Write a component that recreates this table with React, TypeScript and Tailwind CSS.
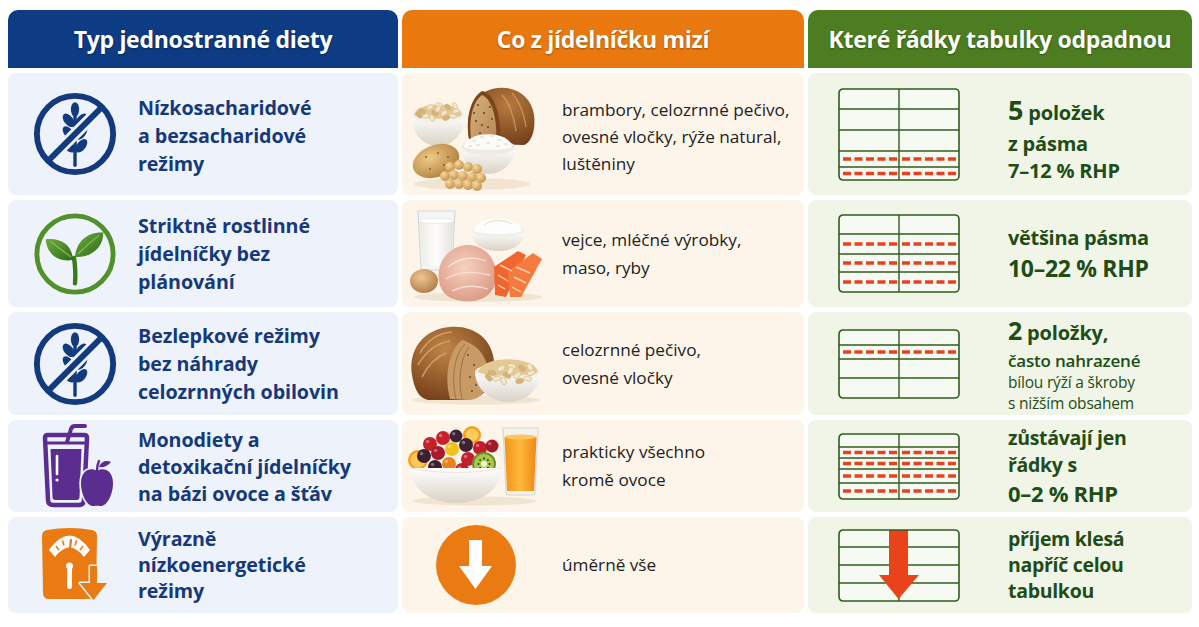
import * as React from "react";

/**
 * Tabulka: typ jednostranné diety → co mizí z jídelníčku → které řádky
 * tabulky odpadnou. Tři sloupce, pět řádků, ikony a ilustrace kreslené v SVG.
 */

const BG1 = "#eef3fb";

function WheatNo() {
  const c = "#133a7c";
  return (
    <svg width="88" height="88" viewBox="0 0 90 90">
      <g fill={c}>
        <path d="M45 26 L45 77" stroke={c} strokeWidth="3.5" strokeLinecap="round" />
        <ellipse cx="45" cy="20" rx="4.2" ry="7.5" />
        {[31, 44, 57].map((y) => (
          <g key={y}>
            <ellipse cx="38.5" cy={y} rx="4.6" ry="8" transform={`rotate(-38 38.5 ${y})`} />
            <ellipse cx="51.5" cy={y} rx="4.6" ry="8" transform={`rotate(38 51.5 ${y})`} />
          </g>
        ))}
      </g>
      <line x1="17" y1="73" x2="73" y2="17" stroke={BG1} strokeWidth="12" />
      <line x1="17" y1="73" x2="73" y2="17" stroke={c} strokeWidth="6" />
      <circle cx="45" cy="45" r="39" fill="none" stroke={c} strokeWidth="6" />
    </svg>
  );
}

function Sprout() {
  return (
    <svg width="88" height="88" viewBox="0 0 90 90">
      <defs>
        <linearGradient id="lf1" x1="0" y1="0" x2="1" y2="1">
          <stop offset="0" stopColor="#6fab3e" />
          <stop offset="1" stopColor="#2e6c19" />
        </linearGradient>
      </defs>
      <circle cx="45" cy="45" r="39" fill="none" stroke="#52902a" strokeWidth="5" />
      <path d="M45 75 C46 64 45 56 44 49" stroke="#3a7a1e" strokeWidth="4.5" fill="none" strokeLinecap="round" />
      <path d="M43 51 C28 54 16 45 15 30 C31 28 42 36 43 51 Z" fill="url(#lf1)" />
      <path d="M45 48 C46 33 57 22 74 23 C74 39 61 49 45 48 Z" fill="url(#lf1)" />
      <path d="M41 48 C34 43 26 37 20 32" stroke="#9ccc6c" strokeWidth="1.2" fill="none" opacity="0.7" />
      <path d="M48 45 C55 38 62 31 70 26" stroke="#9ccc6c" strokeWidth="1.2" fill="none" opacity="0.7" />
    </svg>
  );
}

function Juice() {
  const c = "#5b2d90";
  return (
    <svg width="80" height="84" viewBox="-6 0 80 84">
      <path d="M26 18 L30 5 Q31 2 34 2 L44 2" stroke={c} strokeWidth="4" fill="none" strokeLinecap="round" strokeLinejoin="round" />
      <path d="M4 14 Q4 11 7 11 L43 11 Q46 11 46 14 L43 76 Q43 81 38 81 L12 81 Q7 81 7 76 Z" fill="none" stroke={c} strokeWidth="4.5" />
      <line x1="5" y1="19" x2="45" y2="19" stroke={c} strokeWidth="3" />
      <path d="M9.5 25 L40.5 25 L38.5 73 Q38.5 76 35.5 76 L14.5 76 Q11.5 76 11.5 73 Z" fill={c} />
      <path d="M16 32 L16 50" stroke="#fff" strokeWidth="2.6" strokeLinecap="round" />
      <circle cx="16" cy="56" r="1.6" fill="#fff" />
      <path
        d="M56 47 C50 43 40 46 40 59 C40 72 47 83 53 82 C55 81.5 57 81.5 59 82 C65 83 72 72 72 59 C72 46 62 43 56 47 Z"
        fill={c}
        stroke={BG1}
        strokeWidth="3.5"
        paintOrder="stroke"
      />
      <path d="M56 47 Q56 41 58 37" stroke={c} strokeWidth="2.5" fill="none" strokeLinecap="round" />
      <path d="M58 43 C60 37 66 36 70 38 C67 42 62 44 58 43 Z" fill={c} />
    </svg>
  );
}

function ScaleDown() {
  const c = "#ea7a12";
  return (
    <svg width="70" height="76" viewBox="0 0 70 76">
      <path d="M7 3 Q30 -1 52 3 Q57 4 57 9 L56 66 Q56 72 50 72 L9 72 Q3 72 3 66 L2 9 Q2 4 7 3 Z" fill={c} />
      <path d="M9 23 Q29.5 -6 50 23 L44 30 Q29.5 11 15 30 Z" fill="#fff" />
      <g stroke={c} strokeWidth="1.6">
        <line x1="16" y1="19" x2="19" y2="23" />
        <line x1="22.5" y1="13.5" x2="24" y2="18.5" />
        <line x1="36.5" y1="13.5" x2="35" y2="18.5" />
        <line x1="43" y1="19" x2="40" y2="23" />
      </g>
      <line x1="29.5" y1="26" x2="31" y2="13" stroke={c} strokeWidth="2.2" strokeLinecap="round" />
      <circle cx="29.5" cy="39" r="3.5" fill="#fff" />
      <rect x="27" y="39" width="5" height="23" rx="2.5" fill="#fff" />
      <path
        d="M50 39 L57 39 L57 56 L67 56 L53.5 73 L40 56 L50 56 Z"
        fill={c}
        stroke={BG1}
        strokeWidth="3"
        strokeLinejoin="round"
        paintOrder="stroke"
      />
    </svg>
  );
}

const FLAKES: [number, number, number][] = [
  [14, 26, 20], [22, 22, -30], [31, 20, 10], [40, 22, 40], [48, 26, -20], [18, 31, -10],
  [27, 28, 30], [36, 28, -40], [45, 31, 15], [11, 30, 50], [30, 24, -60], [24, 33, 70],
  [38, 33, -15], [47, 21, 60],
];

function Flakes({ dx, dy, s = 1 }: { dx: number; dy: number; s?: number }) {
  return (
    <g transform={`translate(${dx} ${dy}) scale(${s})`}>
      {FLAKES.map(([x, y, r], i) => (
        <ellipse
          key={i}
          cx={x}
          cy={y}
          rx="3.6"
          ry="2.2"
          transform={`rotate(${r} ${x} ${y})`}
          fill={i % 3 === 0 ? "#d6b37c" : "#f4e6c8"}
          stroke="#c8a66e"
          strokeWidth="0.4"
        />
      ))}
    </g>
  );
}

function FoodCarbs() {
  const peas: [number, number][] = [
    [42, 82], [51, 80], [60, 82], [69, 84], [37, 91], [46, 90], [55, 91], [64, 92], [73, 93],
    [42, 99], [51, 99], [60, 100], [69, 101],
  ];
  return (
    <svg width="128" height="106" viewBox="0 0 128 106">
      <defs>
        <linearGradient id="c-bowl" x1="0" y1="0" x2="0" y2="1">
          <stop offset="0" stopColor="#ffffff" />
          <stop offset="1" stopColor="#d9d1c5" />
        </linearGradient>
        <radialGradient id="c-crust" cx="0.6" cy="0.3" r="0.8">
          <stop offset="0" stopColor="#b87b40" />
          <stop offset="1" stopColor="#6a3815" />
        </radialGradient>
        <linearGradient id="c-face" x1="0" y1="0" x2="1" y2="1">
          <stop offset="0" stopColor="#d8b17c" />
          <stop offset="1" stopColor="#b68655" />
        </linearGradient>
        <radialGradient id="c-pot" cx="0.4" cy="0.35" r="0.75">
          <stop offset="0" stopColor="#edcb86" />
          <stop offset="1" stopColor="#ad7837" />
        </radialGradient>
        <radialGradient id="c-pea" cx="0.35" cy="0.3" r="0.8">
          <stop offset="0" stopColor="#f6da9c" />
          <stop offset="1" stopColor="#c18a44" />
        </radialGradient>
      </defs>
      <ellipse cx="64" cy="99" rx="58" ry="6" fill="#ead8bf" opacity="0.6" />
      {/* bochník s naříznutou stranou */}
      <path d="M62 58 C56 34 62 10 84 4 C104 -1 123 9 126 30 C128 46 123 57 116 60 Z" fill="url(#c-crust)" />
      <path d="M62 59 C57 38 61 14 74 6 C86 8 94 30 92 60 Z" fill="#7b4419" />
      <path d="M64 59 C60 40 63 18 74 10 C84 14 90 34 88 60 Z" fill="url(#c-face)" />
      {[[70, 20], [76, 28], [68, 36], [80, 42], [72, 48], [82, 22], [66, 28], [78, 54], [84, 34], [74, 40], [70, 56]].map(([x, y], i) => (
        <circle key={i} cx={x} cy={y} r="1.1" fill="#6d4a26" />
      ))}
      <path d="M94 10 C100 16 106 30 108 46 M104 8 C111 16 116 28 118 42" stroke="#d8a468" strokeWidth="1.4" fill="none" opacity="0.7" />
      {/* miska ovesných vloček */}
      <path d="M3 30 C4 50 16 61 30 61 C44 61 56 50 57 30 Z" fill="url(#c-bowl)" />
      <ellipse cx="30" cy="30" rx="27" ry="8" fill="#f4f0ea" />
      <path d="M6 30 C8 16 52 16 54 30 C46 35 14 35 6 30 Z" fill="#e3c995" />
      <Flakes dx={0} dy={0} />
      {/* miska rýže */}
      <path d="M53 62 C54 79 66 89 80 89 C94 89 106 79 107 62 Z" fill="url(#c-bowl)" />
      <ellipse cx="80" cy="62" rx="27" ry="8" fill="#efebe4" />
      <path d="M56 62 C58 45 102 45 104 62 C96 66 64 66 56 62 Z" fill="#fbfbf8" />
      {[[66, 56], [74, 52], [84, 51], [92, 55], [70, 60], [80, 58], [90, 61], [98, 59], [62, 61]].map(([x, y], i) => (
        <ellipse key={i} cx={x} cy={y} rx="2" ry="1.1" fill="#e6e2d8" />
      ))}
      <ellipse cx="28" cy="76" rx="24" ry="16" transform="rotate(-20 28 76)" fill="url(#c-pot)" />
      {[[18, 72], [30, 68], [36, 80], [22, 84], [40, 72]].map(([x, y], i) => (
        <circle key={i} cx={x} cy={y} r="0.9" fill="#7c5426" />
      ))}
      {peas.map(([x, y], i) => (
        <circle key={i} cx={x} cy={y} r="5" fill="url(#c-pea)" />
      ))}
    </svg>
  );
}

function FoodProtein() {
  return (
    <svg width="138" height="94" viewBox="0 0 138 94">
      <defs>
        <linearGradient id="p-bowl" x1="0" y1="0" x2="0" y2="1">
          <stop offset="0" stopColor="#ffffff" />
          <stop offset="1" stopColor="#d9d1c5" />
        </linearGradient>
        <radialGradient id="p-egg" cx="0.4" cy="0.35" r="0.7">
          <stop offset="0" stopColor="#eec796" />
          <stop offset="1" stopColor="#b27b47" />
        </radialGradient>
        <radialGradient id="p-chick" cx="0.45" cy="0.4" r="0.7">
          <stop offset="0" stopColor="#f6d2c0" />
          <stop offset="1" stopColor="#d9957f" />
        </radialGradient>
        <linearGradient id="p-milk" x1="0" y1="0" x2="1" y2="0">
          <stop offset="0" stopColor="#eceae4" />
          <stop offset="0.5" stopColor="#fdfdfb" />
          <stop offset="1" stopColor="#e5e2db" />
        </linearGradient>
      </defs>
      <ellipse cx="70" cy="88" rx="64" ry="5" fill="#ead8bf" opacity="0.6" />
      <path d="M10 2 L47 2 L44 58 Q44 61 41 61 L16 61 Q13 61 13 58 Z" fill="#f4f5f5" stroke="#d3d8db" strokeWidth="1.2" />
      <path d="M11.6 12 L45.4 12 L43 57 L15 57 Z" fill="url(#p-milk)" />
      <ellipse cx="28.5" cy="12" rx="17" ry="2.5" fill="#ffffff" stroke="#e4e2dc" strokeWidth="0.6" />
      <path d="M63 22 C64 36 76 42 90 42 C104 42 116 36 117 22 Z" fill="url(#p-bowl)" />
      <ellipse cx="90" cy="22" rx="27" ry="6" fill="#f2efe9" />
      <path d="M66 22 C70 5 110 5 114 22 C104 26 76 26 66 22 Z" fill="#fdfdfb" />
      <path d="M76 16 C84 10 96 10 104 15" stroke="#e7e4dd" strokeWidth="1.2" fill="none" />
      <ellipse cx="16" cy="72" rx="14" ry="12" fill="url(#p-egg)" />
      <path d="M31 72 C28 54 40 38 58 36 C76 35 90 50 88 70 C86 88 70 94 54 92 C40 90 33 84 31 72 Z" fill="url(#p-chick)" />
      <path d="M40 58 C50 50 64 46 78 52 M38 70 C50 62 66 62 82 66 M44 82 C56 76 68 76 80 80" stroke="#fbe4da" strokeWidth="1.3" fill="none" opacity="0.85" />
      <path d="M86 58 L110 42 L118 46 L98 88 L87 86 Z" fill="#ef6630" />
      <path d="M100 62 L125 44 L134 50 L113 88 L102 88 Z" fill="#f47b3d" />
      <g stroke="#ffd9c2" strokeWidth="1.4" opacity="0.9">
        <line x1="92" y1="56" x2="104" y2="62" />
        <line x1="90" y1="66" x2="100" y2="72" />
        <line x1="90" y1="76" x2="97" y2="80" />
        <line x1="108" y1="58" x2="122" y2="64" />
        <line x1="106" y1="68" x2="118" y2="74" />
        <line x1="104" y1="78" x2="113" y2="83" />
      </g>
    </svg>
  );
}

function FoodGrain() {
  return (
    <svg width="136" height="80" viewBox="0 0 136 80">
      <defs>
        <linearGradient id="g-bowl" x1="0" y1="0" x2="0" y2="1">
          <stop offset="0" stopColor="#ffffff" />
          <stop offset="1" stopColor="#d9d1c5" />
        </linearGradient>
        <radialGradient id="g-crust" cx="0.4" cy="0.3" r="0.8">
          <stop offset="0" stopColor="#c08447" />
          <stop offset="1" stopColor="#6e3a15" />
        </radialGradient>
      </defs>
      <ellipse cx="68" cy="75" rx="64" ry="4.5" fill="#ead8bf" opacity="0.6" />
      <path d="M4 50 C0 24 16 4 42 2 C66 0 84 14 86 36 C88 58 78 74 56 75 L20 75 C10 73 6 62 4 50 Z" fill="url(#g-crust)" />
      <path d="M42 74 C36 52 40 26 54 15 C72 20 82 36 80 55 C78 69 70 75 60 75 Z" fill="#c79a66" />
      <path d="M48 74 C43 54 46 30 57 19 M54 74 C50 56 52 34 61 22" stroke="#8e5f32" strokeWidth="1" fill="none" opacity="0.7" />
      {[[60, 30], [66, 40], [62, 52], [72, 46], [68, 60], [74, 58], [64, 66]].map(([x, y], i) => (
        <circle key={i} cx={x} cy={y} r="1" fill="#6d4a26" />
      ))}
      <path d="M12 28 C20 14 32 8 44 7 M10 40 C18 26 30 18 42 16 M14 52 C20 40 28 32 38 28" stroke="#dba970" strokeWidth="1.6" fill="none" opacity="0.8" />
      <path d="M67 47 C68 66 84 77 100 77 C116 77 132 66 133 47 Z" fill="url(#g-bowl)" />
      <ellipse cx="100" cy="47" rx="33" ry="9" fill="#f4f0ea" />
      <path d="M70 47 C74 30 126 30 130 47 C120 52 80 52 70 47 Z" fill="#e3c995" />
      <Flakes dx={68} dy={18} s={1.15} />
    </svg>
  );
}

function FoodFruit() {
  const fruits: [number, number, number, string][] = [
    [22, 18, 7, "#c51f2a"], [35, 12, 7, "#c8222c"], [48, 10, 6.5, "#3d2236"], [16, 30, 7, "#3b1f33"],
    [30, 27, 7, "#a81a2a"], [44, 23, 7, "#f0c21c"], [58, 19, 7, "#3d2236"], [60, 33, 7, "#c02030"],
    [72, 22, 7, "#c41c2a"], [27, 41, 7, "#3a2030"], [41, 38, 7, "#e8841f"], [54, 44, 7, "#c01d2c"],
    [84, 20, 6.5, "#a61a28"],
  ];
  return (
    <svg width="134" height="80" viewBox="0 0 134 80">
      <defs>
        <linearGradient id="f-bowl" x1="0" y1="0" x2="0" y2="1">
          <stop offset="0" stopColor="#ffffff" />
          <stop offset="1" stopColor="#d9d1c5" />
        </linearGradient>
        <linearGradient id="f-oj" x1="0" y1="0" x2="1" y2="0">
          <stop offset="0" stopColor="#f39419" />
          <stop offset="0.5" stopColor="#fbb93c" />
          <stop offset="1" stopColor="#ee8812" />
        </linearGradient>
      </defs>
      <ellipse cx="66" cy="75" rx="62" ry="4.5" fill="#ead8bf" opacity="0.6" />
      <circle cx="10" cy="34" r="10" fill="#f7a21b" />
      <circle cx="10" cy="34" r="7.5" fill="#fcc85a" />
      <circle cx="64" cy="9" r="9" fill="#f59f1c" />
      <circle cx="64" cy="9" r="6.5" fill="#fccb5c" />
      {fruits.map(([x, y, r, col], i) => (
        <g key={i}>
          <circle cx={x} cy={y} r={r} fill={col} />
          <circle cx={x - r * 0.35} cy={y - r * 0.35} r={r * 0.25} fill="#ffffff" opacity="0.35" />
        </g>
      ))}
      <circle cx="76" cy="38" r="12" fill="#6f8f2a" />
      <circle cx="76" cy="38" r="10" fill="#a8c94a" />
      <circle cx="76" cy="38" r="3" fill="#eef3cf" />
      {[0, 45, 90, 135, 180, 225, 270, 315].map((a) => (
        <circle
          key={a}
          cx={76 + 5.5 * Math.cos((a * Math.PI) / 180)}
          cy={38 + 5.5 * Math.sin((a * Math.PI) / 180)}
          r="0.9"
          fill="#1d1d12"
        />
      ))}
      <path d="M2 42 C4 65 24 77 48 77 C72 77 92 65 94 42 Z" fill="url(#f-bowl)" />
      <path d="M2 42 C30 48 66 48 94 42" stroke="#ece7df" strokeWidth="1.2" fill="none" />
      <path d="M95 2 L130 2 L127 66 Q127 69 124 69 L101 69 Q98 69 98 66 Z" fill="#f4f2ee" stroke="#dcd8d0" strokeWidth="1.2" />
      <path d="M96.5 11 L128.5 11 L126 65 L99 65 Z" fill="url(#f-oj)" />
      <ellipse cx="112.5" cy="11" rx="16" ry="2.4" fill="#fcc560" />
    </svg>
  );
}

function DownCircle() {
  return (
    <div className="ml-[28px] flex h-[80px] w-[80px] items-center justify-center rounded-full bg-[#ea7a12]">
      <svg width="80" height="80" viewBox="0 0 80 80">
        <path d="M33 15 L46 15 L46 41 L56 41 L39.5 64 L23 41 L33 41 Z" fill="#fff" />
      </svg>
    </div>
  );
}

function RowTable({ rows, red = [], arrow = false }: { rows: number[]; red?: number[]; arrow?: boolean }) {
  const W = 120;
  const h = rows.reduce((a, b) => a + b, 0);
  const tops: number[] = [];
  rows.reduce((acc, r) => {
    tops.push(acc);
    return acc + r;
  }, 0);
  const line = "#2f5c1d";
  const dash = "#e8411d";
  return (
    <svg width={W + 2} height={h + 2} viewBox={`-1 -1 ${W + 2} ${h + 2}`}>
      <rect x="0" y="0" width={W} height={h} rx="4" fill="#f7faf2" />
      {tops.slice(1).map((t, i) => (
        <line key={i} x1="0" x2={W} y1={t} y2={t} stroke={line} strokeWidth="1.4" />
      ))}
      <line x1={W / 2} x2={W / 2} y1="0" y2={h} stroke={line} strokeWidth="1.4" />
      {red.map((i) => {
        const cy = tops[i] + rows[i] / 2;
        return (
          <g key={i} stroke={dash} strokeWidth="3.6" strokeDasharray="8 3.5">
            <line x1="4" x2={W / 2 - 2} y1={cy} y2={cy} />
            <line x1={W / 2 + 3} x2={W - 3} y1={cy} y2={cy} />
          </g>
        );
      })}
      {arrow && (
        <path d={`M50 0 L69 0 L69 ${h - 26} L80 ${h - 26} L59.5 ${h - 2} L40 ${h - 26} L50 ${h - 26} Z`} fill="#e8431a" />
      )}
      <rect x="0" y="0" width={W} height={h} rx="4" fill="none" stroke={line} strokeWidth="1.6" />
    </svg>
  );
}

function Lines({ lines }: { lines: string[] }) {
  return (
    <>
      {lines.map((l) => (
        <span key={l} className="block">
          {l}
        </span>
      ))}
    </>
  );
}

function Header({ color, children }: { color: string; children: React.ReactNode }) {
  return (
    <div
      className={`flex items-center justify-center rounded-t-[10px] text-[23px] font-bold tracking-[-0.3px] text-white [text-shadow:0_1px_2px_rgba(0,0,0,0.35)] ${color}`}
    >
      {children}
    </div>
  );
}

type Row = {
  icon: React.ReactNode;
  diet: string[];
  dietLead: string;
  food: React.ReactNode;
  foodPad: string;
  gone: string[];
  goneLead: string;
  table: React.ReactNode;
  result: React.ReactNode;
};

const ROWS: Row[] = [
  {
    icon: <WheatNo />,
    diet: ["Nízkosacharidové", "a bezsacharidové", "režimy"],
    dietLead: "leading-[28px] mt-[4px]",
    food: <FoodCarbs />,
    foodPad: "mt-[8px]",
    gone: ["brambory, celozrnné pečivo,", "ovesné vločky, rýže natural,", "luštěniny"],
    goneLead: "leading-[27px] mt-[4px]",
    table: <RowTable rows={[20, 21, 21, 16, 13]} red={[3, 4]} />,
    result: (
      <div className="mt-[8px] text-[20px] font-bold tracking-[-0.2px]">
        <p className="leading-[34px]">
          <span className="text-[27px] leading-[34px]">5</span> položek
        </p>
        <p className="leading-[27px]">z pásma</p>
        <p className="leading-[27px]">7–12 % RHP</p>
      </div>
    ),
  },
  {
    icon: <Sprout />,
    diet: ["Striktně rostlinné", "jídelníčky bez", "plánování"],
    dietLead: "leading-[28px]",
    food: <FoodProtein />,
    foodPad: "mt-[4px]",
    gone: ["vejce, mléčné výrobky,", "maso, ryby"],
    goneLead: "leading-[28px]",
    table: <RowTable rows={[19, 20, 18, 20]} red={[1, 2, 3]} />,
    result: (
      <div className="font-bold tracking-[-0.3px]">
        <p className="text-[20px] leading-[28px]">většina pásma</p>
        <p className="text-[23px] leading-[32px]">10–22 % RHP</p>
      </div>
    ),
  },
  {
    icon: <WheatNo />,
    diet: ["Bezlepkové režimy", "bez náhrady", "celozrnných obilovin"],
    dietLead: "leading-[28px]",
    food: <FoodGrain />,
    foodPad: "mt-[2px]",
    gone: ["celozrnné pečivo,", "ovesné vločky"],
    goneLead: "leading-[28px]",
    table: <RowTable rows={[15, 14, 19, 20]} red={[1]} />,
    result: (
      <div className="tracking-[-0.2px]">
        <p className="text-[20px] font-bold leading-[32px]">
          <span className="text-[25px] leading-[32px]">2</span> položky,
        </p>
        <p className="text-[17px] font-semibold leading-[23px]">často nahrazené</p>
        <p className="text-[15.5px] font-medium leading-[21px]">bílou rýží a škroby</p>
        <p className="text-[15.5px] font-medium leading-[21px]">s nižším obsahem</p>
      </div>
    ),
  },
  {
    icon: <Juice />,
    diet: ["Monodiety a", "detoxikační jídelníčky", "na bázi ovoce a šťáv"],
    dietLead: "leading-[27px]",
    food: <FoodFruit />,
    foodPad: "",
    gone: ["prakticky všechno", "kromě ovoce"],
    goneLead: "leading-[28px]",
    table: <RowTable rows={[13, 11, 11, 14, 16]} red={[1, 2, 3, 4]} />,
    result: (
      <div className="font-bold tracking-[-0.3px]">
        <p className="text-[19.5px] leading-[26px]">zůstávají jen</p>
        <p className="text-[19.5px] leading-[27px]">řádky s</p>
        <p className="text-[22px] leading-[30px]">0–2 % RHP</p>
      </div>
    ),
  },
  {
    icon: <ScaleDown />,
    diet: ["Výrazně", "nízkoenergetické", "režimy"],
    dietLead: "leading-[26px]",
    food: <DownCircle />,
    foodPad: "",
    gone: ["úměrně vše"],
    goneLead: "leading-[28px]",
    table: <RowTable rows={[17, 18, 18, 18]} arrow />,
    result: (
      <div className="text-[19.5px] font-bold leading-[26px] tracking-[-0.3px]">
        <p>příjem klesá</p>
        <p>napříč celou</p>
        <p>tabulkou</p>
      </div>
    ),
  },
];

export default function App() {
  return (
    <div className="min-h-screen bg-white font-['Open_Sans','Noto_Sans',sans-serif]">
      <div className="grid grid-cols-[390px_402px_384px] grid-rows-[58px_122px_107px_103px_92px_96px] gap-x-[4px] gap-y-[5px] px-[8px] pt-[10px]">
        <Header color="bg-[#0d3b84]">Typ jednostranné diety</Header>
        <Header color="bg-[#e9790e]">Co z jídelníčku mizí</Header>
        <Header color="bg-[#4c7d20]">Které řádky tabulky odpadnou</Header>

        {ROWS.map((r, i) => (
          <React.Fragment key={i}>
            <div className="flex items-center rounded-[8px] bg-[#eef3fb] pl-[20px]">
              <div className="flex w-[94px] shrink-0 justify-center">{r.icon}</div>
              <p className={`ml-[16px] text-[19.7px] font-bold tracking-[-0.1px] text-[#16397c] ${r.dietLead}`}>
                <Lines lines={r.diet} />
              </p>
            </div>
            <div className="flex items-center rounded-[8px] bg-[#fdf5ea] pl-[6px]">
              <div className={`flex w-[146px] shrink-0 ${r.foodPad}`}>{r.food}</div>
              <p className={`ml-[8px] text-[17.2px] text-[#222222] ${r.goneLead}`}>
                <Lines lines={r.gone} />
              </p>
            </div>
            <div className="flex items-center rounded-[8px] bg-[#f0f5e8] pl-[30px]">
              <div className="w-[122px] shrink-0">{r.table}</div>
              <div className="ml-[48px] text-[#1f4d15]">{r.result}</div>
            </div>
          </React.Fragment>
        ))}
      </div>
    </div>
  );
}
